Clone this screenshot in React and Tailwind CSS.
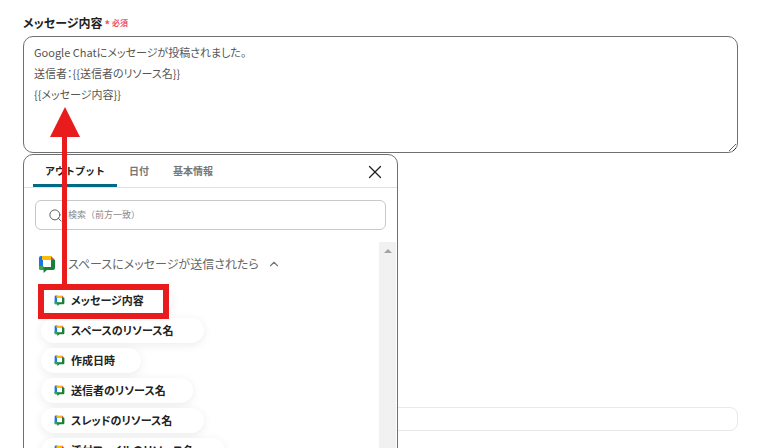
import { useState } from "react";
import { ChevronUp, Search, X } from "lucide-react";

const outputs = [
  { label: "メッセージ内容", width: "w-[131px]" },
  { label: "スペースのリソース名", width: "w-[163px]" },
  { label: "作成日時", width: "w-[100px]" },
  { label: "送信者のリソース名", width: "w-[152px]" },
  { label: "スレッドのリソース名", width: "w-[163px]" },
  { label: "添付ファイルのリソース名", width: "w-[184px]" },
];

const tabs = ["アウトプット", "日付", "基本情報"];

const body = `Google Chatにメッセージが投稿されました。
送信者：{{送信者のリソース名}}
{{メッセージ内容}}`;

function ChatLogo({ size }) {
  return (
    <svg width={size} height={size} viewBox="0 0 18 18" className="shrink-0">
      <path d="M1 13V3a2 2 0 0 1 2-2h2.5v5H6v7z" fill="#1a73e8" />
      <path d="M4 1h9v4H4z" fill="#fbbc04" />
      <path d="M13 1l4 4h-4z" fill="#ea4335" />
      <path d="M13 5h4v8a2 2 0 0 1-2 2H9l-3.500 3v-3H3a2 2 0 0 1-2-2v-1h12z" fill="#188038" />
      <path d="M1 11h4.500v4H3a2 2 0 0 1-2-2z" fill="#34a853" />
      <path d="M5 5h8v6.500H5z" fill="#fff" />
    </svg>
  );
}

function OutputPill({ label, width }) {
  return (
    <div className={`flex h-[25px] shrink-0 items-center gap-[6px] rounded-full bg-white pl-[13px] shadow-[0_2px_10px_rgba(0,0,0,0.08)] ${width}`}>
      <ChatLogo size={11} />
      <span className="whitespace-nowrap text-[11px] font-bold text-[#222] [font-feature-settings:'palt']">{label}</span>
    </div>
  );
}

export default function App() {
  const [activeTab, setActiveTab] = useState(0);

  return (
    <div className="relative h-[448px] w-[772px] overflow-hidden bg-white pl-[23px] pr-[34px] pt-[14px] font-['Noto_Sans_CJK_JP','Noto_Sans',sans-serif]">
      {/* label */}
      <div className="flex h-[18px] items-center">
        <span className="text-[12px] font-bold text-[#222] [font-feature-settings:'palt']">メッセージ内容</span>
        <span className="ml-[2px] mt-[3px] text-[11px] font-bold leading-none text-[#f0506e]">*</span>
        <span className="ml-[2px] text-[8px] font-bold text-[#f0506e]">必須</span>
      </div>

      {/* message box + output picker */}
      <div className="relative mt-[4px]">
        <textarea
          readOnly
          defaultValue={body}
          className="block h-[117px] w-full resize-y rounded-[10px] border border-[#707070] bg-white px-[10px] py-[5px] text-[11px] leading-[21px] text-[#555] outline-none [font-feature-settings:'palt']"
        />

        <div className="absolute left-0 top-[118px] z-10 h-[320px] w-[375px] overflow-hidden rounded-[10px] border border-[#707070] bg-white">
          {/* tabs */}
          <div className="flex h-[33px] items-stretch justify-between border-b border-[#e2e2e2] pl-[9px] pr-[11px]">
            <div className="flex">
              {tabs.map((tab, i) => (
                <button
                  key={tab}
                  onClick={() => setActiveTab(i)}
                  className={`border-b-[3px] px-3 pt-[1px] text-[10px] font-bold ${
                    activeTab === i ? "border-[#006a86] text-[#222]" : "border-transparent text-[#777]"
                  }`}
                >
                  {tab}
                </button>
              ))}
            </div>
            <X size={22} strokeWidth={1.4} className="mt-[6px] text-[#222]" />
          </div>

          {/* search */}
          <div className="mx-[11px] mt-[12px] flex h-[30px] items-center rounded-[6px] border border-[#c8c8c8] pl-[12px]">
            <Search size={15} strokeWidth={1.5} className="text-[#555]" />
            <span className="ml-[5px] text-[9px] text-[#888]">検索（前方一致）</span>
          </div>

          {/* list */}
          <div className="mt-[12px] flex">
            <div className="min-w-0 flex-1">
              <div className="mt-[12px] flex h-[20px] items-center pl-[14px]">
                <ChatLogo size={18} />
                <span className="ml-[12px] text-[12px] text-[#666] [font-feature-settings:'palt']">スペースにメッセージが送信されたら</span>
                <ChevronUp size={14} strokeWidth={2} className="ml-[8px] text-[#777]" />
              </div>
              <div className="mt-[14px] flex flex-col items-start gap-[5px] pl-[17px]">
                {outputs.map((o) => (
                  <OutputPill key={o.label} {...o} />
                ))}
              </div>
            </div>
            <div className="mr-[1px] flex h-[210px] w-[17px] shrink-0 justify-center bg-[#f1f1f1] pt-[7px]">
              <div className="h-0 w-0 border-x-[4px] border-b-[4px] border-x-transparent border-b-[#a3a3a3]" />
            </div>
          </div>
        </div>

        {/* field hidden behind the picker */}
        <div className="mt-[254px] h-[24px] w-full rounded-[8px] border border-[#e8e8e8]" />
      </div>

      {/* annotation: red arrow and box */}
      <svg width="772" height="448" className="pointer-events-none absolute left-0 top-0 z-20">
        <path d="M62 136h5v150h-5z" fill="#e81c1c" />
        <path d="M65 107l15 30H50z" fill="#e81c1c" />
      </svg>
      <div className="pointer-events-none absolute left-[38px] top-[284px] z-20 h-[35px] w-[131px] border-[6px] border-[#e81c1c]" />
    </div>
  );
}
